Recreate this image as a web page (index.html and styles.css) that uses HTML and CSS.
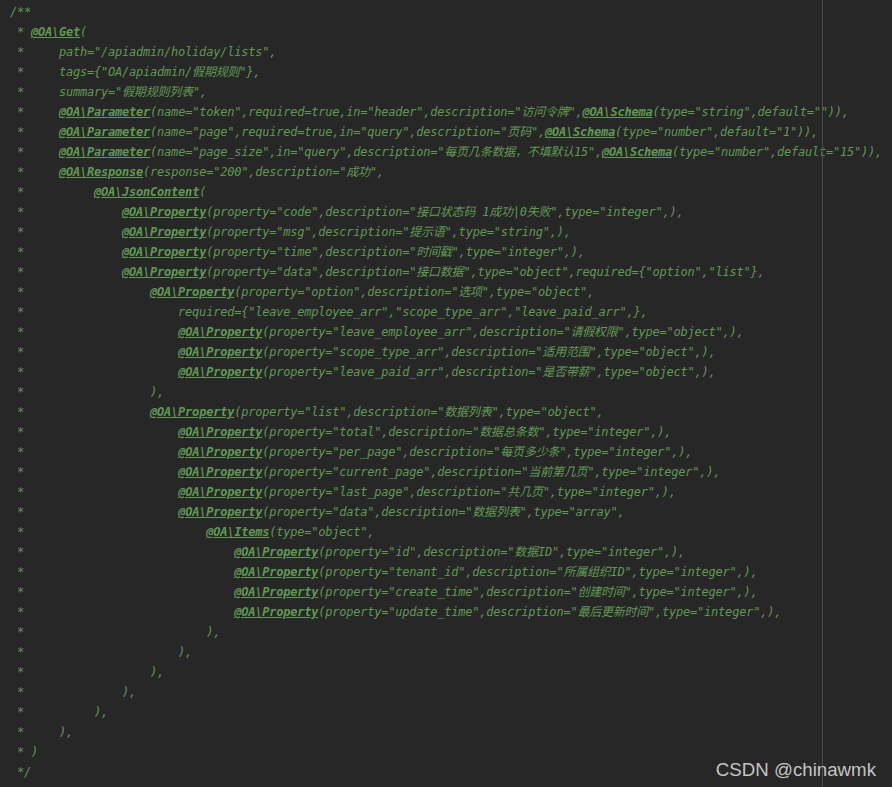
FILE: index.html
```html
<!DOCTYPE html>
<html lang="zh-CN">
<head>
    <meta charset="UTF-8">
    <title>OA Holiday lists</title>
    <link rel="stylesheet" href="styles.css">
</head>
<body>
    <div class="editor">
        <div class="code">
<div class="ln">/**</div>
<div class="ln"> * <span class="tag">@OA\Get</span>(</div>
<div class="ln"> *     path="/apiadmin/holiday/lists",</div>
<div class="ln"> *     tags={"OA/apiadmin/假期规则"},</div>
<div class="ln"> *     summary="假期规则列表",</div>
<div class="ln"> *     <span class="tag">@OA\Parameter</span>(name="token",required=true,in="header",description="访问令牌",<span class="tag">@OA\Schema</span>(type="string",default="")),</div>
<div class="ln"> *     <span class="tag">@OA\Parameter</span>(name="page",required=true,in="query",description="页码",<span class="tag">@OA\Schema</span>(type="number",default="1")),</div>
<div class="ln"> *     <span class="tag">@OA\Parameter</span>(name="page_size",in="query",description="每页几条数据，不填默认15",<span class="tag">@OA\Schema</span>(type="number",default="15")),</div>
<div class="ln"> *     <span class="tag">@OA\Response</span>(response="200",description="成功",</div>
<div class="ln"> *          <span class="tag">@OA\JsonContent</span>(</div>
<div class="ln"> *              <span class="tag">@OA\Property</span>(property="code",description="接口状态码 1成功|0失败",type="integer",),</div>
<div class="ln"> *              <span class="tag">@OA\Property</span>(property="msg",description="提示语",type="string",),</div>
<div class="ln"> *              <span class="tag">@OA\Property</span>(property="time",description="时间戳",type="integer",),</div>
<div class="ln"> *              <span class="tag">@OA\Property</span>(property="data",description="接口数据",type="object",required={"option","list"},</div>
<div class="ln"> *                  <span class="tag">@OA\Property</span>(property="option",description="选项",type="object",</div>
<div class="ln"> *                      required={"leave_employee_arr","scope_type_arr","leave_paid_arr",},</div>
<div class="ln"> *                      <span class="tag">@OA\Property</span>(property="leave_employee_arr",description="请假权限",type="object",),</div>
<div class="ln"> *                      <span class="tag">@OA\Property</span>(property="scope_type_arr",description="适用范围",type="object",),</div>
<div class="ln"> *                      <span class="tag">@OA\Property</span>(property="leave_paid_arr",description="是否带薪",type="object",),</div>
<div class="ln"> *                  ),</div>
<div class="ln"> *                  <span class="tag">@OA\Property</span>(property="list",description="数据列表",type="object",</div>
<div class="ln"> *                      <span class="tag">@OA\Property</span>(property="total",description="数据总条数",type="integer",),</div>
<div class="ln"> *                      <span class="tag">@OA\Property</span>(property="per_page",description="每页多少条",type="integer",),</div>
<div class="ln"> *                      <span class="tag">@OA\Property</span>(property="current_page",description="当前第几页",type="integer",),</div>
<div class="ln"> *                      <span class="tag">@OA\Property</span>(property="last_page",description="共几页",type="integer",),</div>
<div class="ln"> *                      <span class="tag">@OA\Property</span>(property="data",description="数据列表",type="array",</div>
<div class="ln"> *                          <span class="tag">@OA\Items</span>(type="object",</div>
<div class="ln"> *                              <span class="tag">@OA\Property</span>(property="id",description="数据ID",type="integer",),</div>
<div class="ln"> *                              <span class="tag">@OA\Property</span>(property="tenant_id",description="所属组织ID",type="integer",),</div>
<div class="ln"> *                              <span class="tag">@OA\Property</span>(property="create_time",description="创建时间",type="integer",),</div>
<div class="ln"> *                              <span class="tag">@OA\Property</span>(property="update_time",description="最后更新时间",type="integer",),</div>
<div class="ln"> *                          ),</div>
<div class="ln"> *                      ),</div>
<div class="ln"> *                  ),</div>
<div class="ln"> *              ),</div>
<div class="ln"> *          ),</div>
<div class="ln"> *     ),</div>
<div class="ln"> * )</div>
<div class="ln"> */</div>
        </div>
        <div class="margin-guide"></div>
        <div class="watermark">CSDN @chinawmk</div>
    </div>
</body>
</html>
```

FILE: styles.css
```css
:root {
    --bg: #272727;
    --doc-green: #629755;
    --guide: #4a4a4a;
}

html, body {
    margin: 0;
    padding: 0;
    background: var(--bg);
}

.editor {
    position: relative;
    width: 892px;
    height: 787px;
    overflow: hidden;
}

.code {
    padding: 2px 0 0 10px;
    font-family: "DejaVu Sans Mono", "Noto Sans CJK SC", monospace;
    font-size: 12px;
    letter-spacing: -0.22px;
    font-style: italic;
    color: var(--doc-green);
}

.ln {
    height: 20px;
    line-height: 20px;
    white-space: pre;
}

.tag {
    font-weight: bold;
    text-decoration: underline;
}

/* right margin guide of the editor */
.margin-guide {
    position: absolute;
    top: 0;
    bottom: 0;
    left: 822px;
    width: 1px;
    background: var(--guide);
}

.watermark {
    position: absolute;
    top: 760px;
    right: 16px;
    font-family: "Liberation Sans", Arial, sans-serif;
    font-size: 18.7px;
    line-height: 19px;
    color: #c4c4c4;
}
```
